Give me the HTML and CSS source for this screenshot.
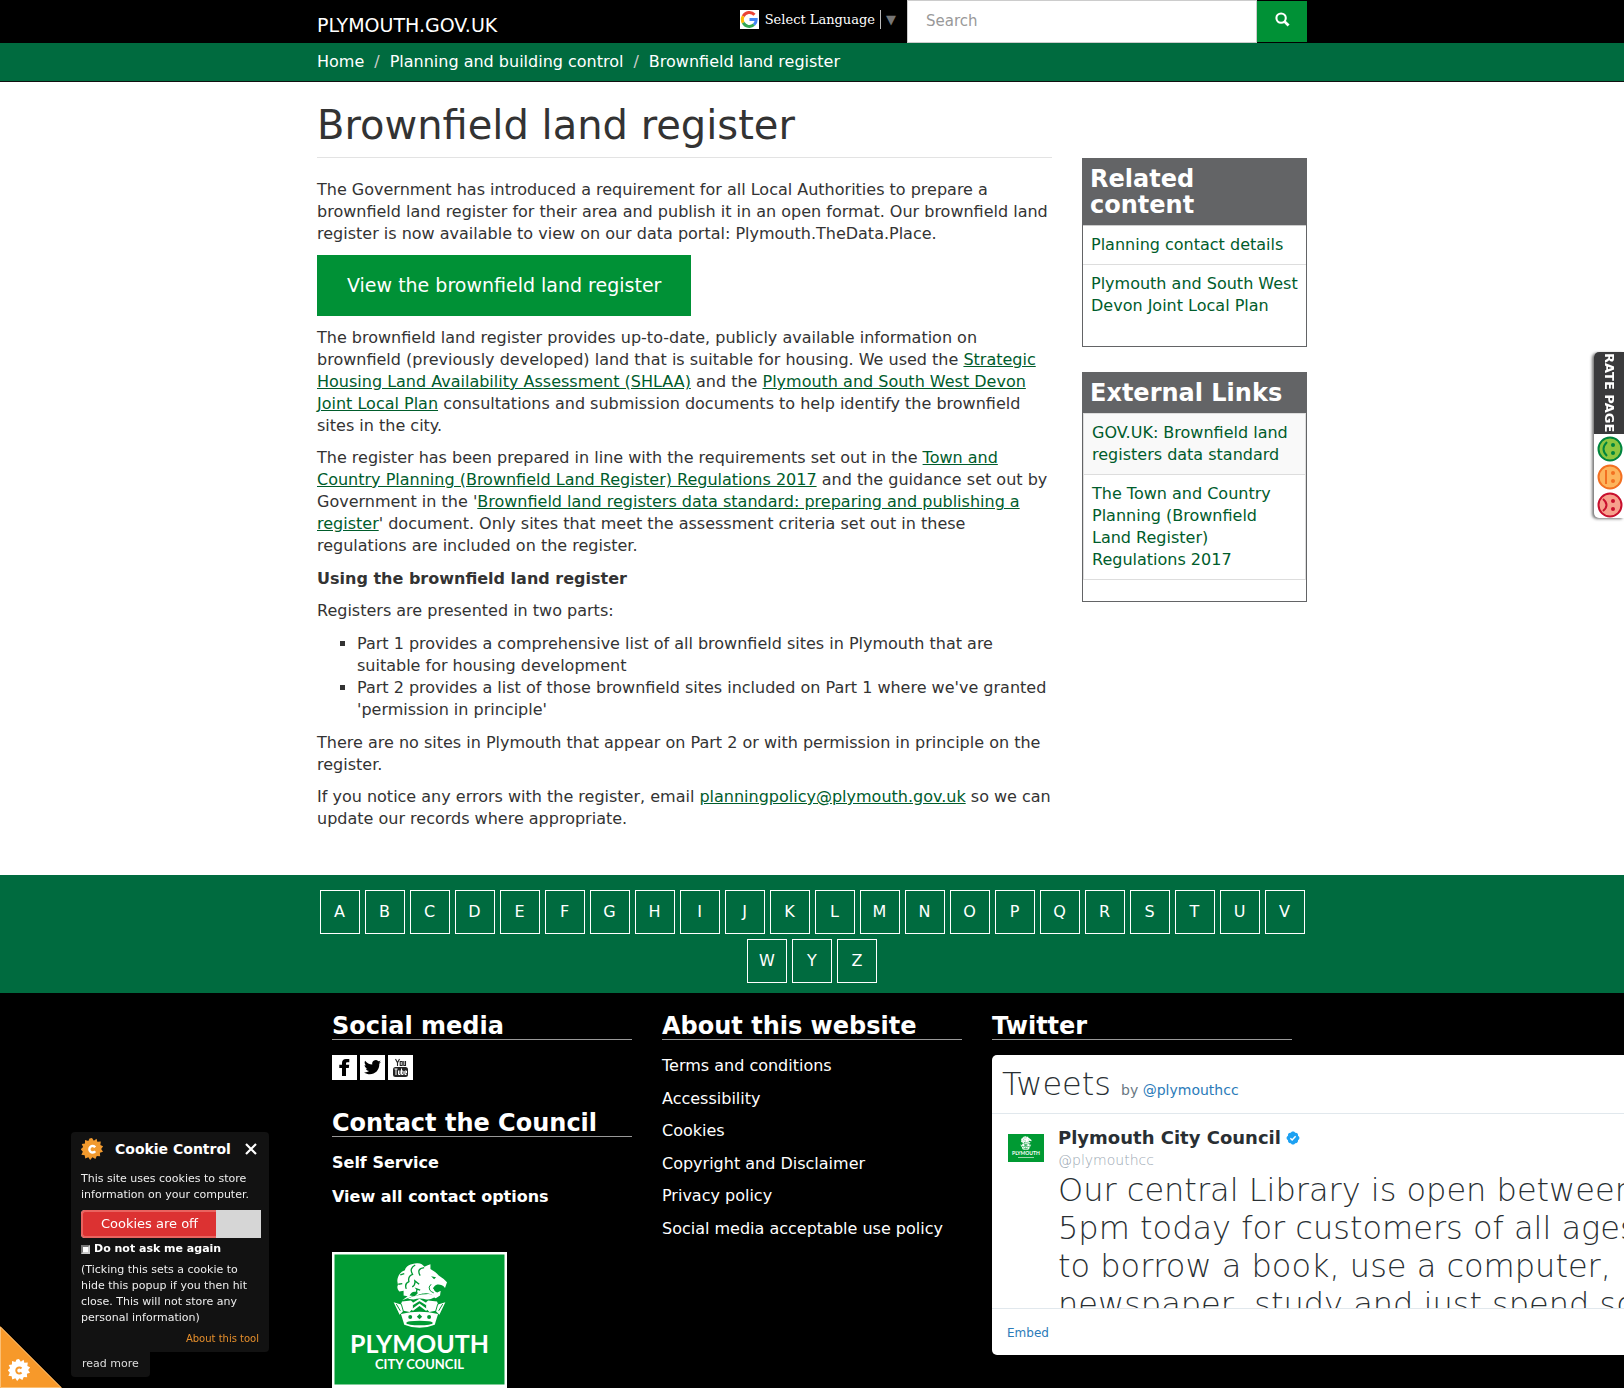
FILE: index.html
```html
<!DOCTYPE html>
<html lang="en">
<head>
<meta charset="utf-8">
<title>Brownfield land register | PLYMOUTH.GOV.UK</title>
<meta name="viewport" content="width=device-width, initial-scale=1">
<link rel="stylesheet" href="styles.css">
</head>
<body>
<svg class="defs" aria-hidden="true">
  <symbol id="cog" viewBox="0 0 24 24">
    <path d="M12 0l2 3 3-2.300.800 3.500 3.800-.300-.500 3.700 3 1.400L22 12l2 3-3.400 1.200.3 3.800-3.700-.300L15.700 23 12.500 21 10 24 8 20.900 4.600 22.300 4 18.700.4 18.200 2 15-.2 12.300 2.300 9.800.8 6.500 4.300 5.900 4.400 2.200 8 3.300 9.300.500z"/>
  </symbol>
  <symbol id="lion" viewBox="218 66 166 200">
    <path fill="#fff" d="M254 90C256 78 272 70 290 69C302 68 308 74 313 79Q320 76 331 72L331 86C340 91 350 98 356 106L371 116L381 126L375 143C366 132 350 130 343 138C338 146 344 155 352 157L362 152L360 166L347 174L338 170C340 163 322 158 312 160C296 160 290 170 276 168C268 173 256 176 246 180L262 168L250 166L250 152L237 154C230 146 230 138 233 134L231 122C232 108 240 94 254 90Z"/>
    <path fill="none" stroke="#009a33" stroke-width="4" d="M285 74Q266 84 277 102Q262 108 266 124Q252 130 258 146M312 82C296 84 292 92 300 106M276 140Q286 134 284 122L297 132M287 158Q292 150 289 146L300 150M240 104l12-4M234 132l12-2"/>
    <path fill="#009a33" d="M333 108l15 3-6 6zM366 140l-16-4-12 7 8 10 16-1zM268 166q8-18 26-8l-10 10z"/>
    <path fill="#fff" d="M262 176Q290 162 318 162Q340 160 342 172Q330 180 318 178Q300 172 280 178Z"/>
    <path fill="none" stroke="#009a33" stroke-width="3" d="M333 132q-10 8-4 18q6 6 12 8"/>
    <path fill="#fff" d="M220 186L242 193L245 184L272 181L278 186V206L268 216L250 212L238 224ZM376 186L354 193L351 184L324 181L318 186V206L328 216L346 212L358 224Z"/>
    <path fill="none" stroke="#009a33" stroke-width="3" d="M243 192l7 24M353 192l-7 24M228 192l12 20M368 192l-12 20"/>
    <path fill="none" stroke="#fff" stroke-width="6" d="M276 193l22-14 22 14M276 210l22-16 22 16"/>
    <path fill="#fff" d="M242 222Q298 208 354 222L344 254Q298 273 252 254Z"/>
    <g fill="#009a33"><circle cx="270" cy="231" r="6"/><circle cx="327" cy="231" r="6"/><path d="M298 222l8 8-8 8-8-8z"/><ellipse cx="298" cy="249" rx="40" ry="7"/></g>
  </symbol>
</svg>

<header class="topbar">
  <div class="container topbar-inner">
    <a class="brand" href="#">PLYMOUTH.GOV.UK</a>
    <a class="translate" href="#">
      <svg class="google" viewBox="0 0 19 19" aria-hidden="true">
        <path fill="#fff" d="M0 0h19v19H0z"/>
        <g fill="none" stroke-width="3">
          <path stroke="#ea4335" d="M3.200 6.200A7 7 0 0 1 14.500 4.700"/>
          <path stroke="#fbbc05" d="M3.200 12.800A7 7 0 0 1 3.200 6.200"/>
          <path stroke="#34a853" d="M14 14.700A7 7 0 0 1 3.200 12.800"/>
          <path stroke="#4285f4" d="M9.500 9.500H16.200A7 7 0 0 1 14 14.700"/>
        </g>
      </svg>
      <span class="translate-text">Select Language</span>
      <span class="translate-arrow">▼</span>
    </a>
    <form class="search">
      <input class="search-input" type="text" placeholder="Search" aria-label="Search">
      <button class="search-button" type="button" aria-label="Search">
        <svg class="search-icon" viewBox="0 0 16 16" aria-hidden="true"><circle cx="6.500" cy="6.500" r="5" fill="none" stroke="#fff" stroke-width="2.200"/><path d="M10 10l4.500 4.500" stroke="#fff" stroke-width="3"/></svg>
      </button>
    </form>
  </div>
</header>

<nav class="crumbs" aria-label="Breadcrumb">
  <ol class="container crumb-list">
    <li><a href="#">Home</a></li>
    <li><a href="#">Planning and building control</a></li>
    <li><a href="#">Brownfield land register</a></li>
  </ol>
</nav>

<div class="container page">
  <main class="main">
    <h1 class="title">Brownfield land register</h1>
    <p>The Government has introduced a requirement for all Local Authorities to prepare a brownfield land register for their area and publish it in an open format. Our brownfield land register is now available to view on our data portal: Plymouth.TheData.Place.</p>
    <div class="action"><a class="cta" href="#">View the brownfield land register</a></div>
    <p>The brownfield land register provides up-to-date, publicly available information on brownfield (previously developed) land that is suitable for housing. We used the <a href="#">Strategic Housing Land Availability Assessment (SHLAA)</a> and the <a href="#">Plymouth and South West Devon Joint Local Plan</a> consultations and submission documents to help identify the brownfield sites in the city.</p>
    <p>The register has been prepared in line with the requirements set out in the <a href="#">Town and Country Planning (Brownfield Land Register) Regulations 2017</a> and the guidance set out by Government in the '<a href="#">Brownfield land registers data standard: preparing and publishing a register</a>' document. Only sites that meet the assessment criteria set out in these regulations are included on the register.</p>
    <h2 class="subhead">Using the brownfield land register</h2>
    <p>Registers are presented in two parts:</p>
    <ul class="parts">
      <li>Part 1 provides a comprehensive list of all brownfield sites in Plymouth that are suitable for housing development</li>
      <li>Part 2 provides a list of those brownfield sites included on Part 1 where we've granted 'permission in principle'</li>
    </ul>
    <p>There are no sites in Plymouth that appear on Part 2 or with permission in principle on the register.</p>
    <p>If you notice any errors with the register, email <a href="#">planningpolicy@plymouth.gov.uk</a> so we can update our records where appropriate.</p>
  </main>
  <aside class="side">
    <section class="box">
      <h2>Related content</h2>
      <ul class="related">
        <li><a href="#">Planning contact details</a></li>
        <li><a href="#">Plymouth and South West Devon Joint Local Plan</a></li>
      </ul>
    </section>
    <section class="box">
      <h2>External Links</h2>
      <ul class="external">
        <li><a href="#">GOV.UK: Brownfield land registers data standard</a></li>
        <li><a href="#">The Town and Country Planning (Brownfield Land Register) Regulations 2017</a></li>
      </ul>
    </section>
  </aside>
</div>

<nav class="az" aria-label="A to Z">
  <ul class="container az-list">
    <li><a href="#">A</a></li><li><a href="#">B</a></li><li><a href="#">C</a></li><li><a href="#">D</a></li><li><a href="#">E</a></li><li><a href="#">F</a></li><li><a href="#">G</a></li><li><a href="#">H</a></li><li><a href="#">I</a></li><li><a href="#">J</a></li><li><a href="#">K</a></li><li><a href="#">L</a></li><li><a href="#">M</a></li><li><a href="#">N</a></li><li><a href="#">O</a></li><li><a href="#">P</a></li><li><a href="#">Q</a></li><li><a href="#">R</a></li><li><a href="#">S</a></li><li><a href="#">T</a></li><li><a href="#">U</a></li><li><a href="#">V</a></li><li><a href="#">W</a></li><li><a href="#">Y</a></li><li><a href="#">Z</a></li>
  </ul>
</nav>

<footer class="footer">
  <div class="container footer-grid">
    <div class="col">
      <h2>Social media</h2>
      <div class="social">
        <a href="#" aria-label="Facebook"><svg viewBox="0 0 25 25" aria-hidden="true"><path d="M10 21v-8H7.300V9.800H10V8c0-2.800 1.500-4 4-4h3.300v3.300h-1.800c-1.100 0-1.500.4-1.500 1.300v1.200h3.200L16.800 13H14v8z"/></svg></a>
        <a href="#" aria-label="Twitter"><svg viewBox="0 0 25 25" aria-hidden="true"><path d="M21 6.800c-.6.300-1.300.5-2 .6.700-.4 1.300-1.100 1.500-1.900-.7.400-1.400.7-2.200.8A3.500 3.500 0 0 0 12.300 9.500C9.400 9.400 6.800 8 5.100 5.800c-1 1.600-.4 3.600 1.100 4.700-.6 0-1.100-.2-1.600-.4 0 1.700 1.200 3.100 2.800 3.400-.5.100-1 .2-1.600.1.400 1.400 1.700 2.400 3.300 2.400A7 7 0 0 1 4 17.400C11 22 19.700 17.400 19.300 8.700c.7-.5 1.200-1.100 1.700-1.900z"/></svg></a>
        <a href="#" aria-label="YouTube"><svg viewBox="0 0 25 25" aria-hidden="true"><rect x="5" y="12" width="15" height="10" rx="2.500" fill="#222"/><path d="M7.500 4l2 3.800V11M11.500 4l-2 3.800M12.200 6.500h2v4h-2zM15.800 6v4.500h1.700V6" fill="none" stroke="#222" stroke-width="1.100"/><path d="M6.500 14h3M8 14v6M10.500 15.500v4h1.600v-4M13.500 13.500v6h1.600v-3.500h-1.600M18.500 19.500h-1.600v-3.500h1.600v2h-1.600" fill="none" stroke="#fff"/></svg></a>
      </div>
      <h2>Contact the Council</h2>
      <ul class="contact">
        <li><a href="#">Self Service</a></li>
        <li><a href="#">View all contact options</a></li>
      </ul>
      <svg class="logo" viewBox="0 0 175 136" role="img" aria-label="Plymouth City Council">
        <path fill="#fff" d="M0 0h175v136H0z"/><path fill="#009a33" d="M2.500 2.500h170v130h-170z"/>
        <use href="#lion" x="61" y="10" width="55" height="67"/>
        <text class="logo-name" x="87.500" y="101">PLYMOUTH</text>
        <text class="logo-sub" x="87.500" y="117">CITY COUNCIL</text>
      </svg>
    </div>
    <div class="col">
      <h2>About this website</h2>
      <ul class="about">
        <li><a href="#">Terms and conditions</a></li>
        <li><a href="#">Accessibility</a></li>
        <li><a href="#">Cookies</a></li>
        <li><a href="#">Copyright and Disclaimer</a></li>
        <li><a href="#">Privacy policy</a></li>
        <li><a href="#">Social media acceptable use policy</a></li>
      </ul>
    </div>
    <div class="col">
      <h2>Twitter</h2>
      <div class="timeline">
        <div class="timeline-head"><span class="tweets">Tweets</span> <span class="by">by <a href="#">@plymouthcc</a></span></div>
        <div class="timeline-body">
          <svg class="avatar" viewBox="0 0 36 28" aria-hidden="true"><path fill="#009a33" d="M0 0h36v28H0z"/><use href="#lion" x="11" y="2" width="14" height="14"/><text class="avatar-name" x="18" y="21">PLYMOUTH</text><path stroke="#9dd6ae" d="M10 23.500h16"/></svg>
          <div class="tweet">
            <div class="author">Plymouth City Council
              <svg class="verified" viewBox="0 0 24 24" aria-hidden="true"><path fill="#1da1f2" d="M12 1c1.800 0 3 .9 3.700 2.200 3-.6 5.500 1.900 4.900 4.900C22 8.900 23 10.300 23 12s-1 3.100-2.400 3.900c.6 3-1.900 5.500-4.900 4.900C15 22.100 13.800 23 12 23s-3-.9-3.700-2.200c-3 .6-5.500-1.900-4.900-4.900C2 15.100 1 13.700 1 12s1-3.100 2.400-3.900c-.6-3 1.900-5.500 4.900-4.900C9 1.900 10.200 1 12 1z"/><path fill="none" stroke="#fff" stroke-width="2.500" d="M7.500 12.500l3 3L16.500 9"/></svg>
            </div>
            <div class="handle">@plymouthcc</div>
            <p class="tweet-text">Our central Library is open between<br>5pm today for customers of all ages<br>to borrow a book, use a computer,<br>newspaper, study and just spend some</p>
          </div>
        </div>
        <div class="timeline-foot"><a href="#">Embed</a></div>
      </div>
    </div>
  </div>
</footer>

<a class="rate" href="#">
  <span class="rate-label">RATE PAGE</span>
  <svg class="faces" viewBox="0 0 30 84" aria-hidden="true">
    <g stroke-width="2">
      <g stroke="#00853e" fill="#8cc63f"><circle cx="16" cy="15" r="11.500"/><path fill="none" d="M13 8q-7 7 0 14"/></g>
      <g stroke="#f37021" fill="#fdb45c"><circle cx="16" cy="43" r="11.500"/><path fill="none" d="M12 36v14"/></g>
      <g stroke="#c8102e" fill="#f7a08c"><circle cx="16" cy="71" r="11.500"/><path fill="none" d="M9 65q7 6 0 12"/></g>
    </g>
    <g fill="#00853e"><circle cx="19" cy="11" r="2"/><circle cx="19" cy="19" r="2"/></g>
    <g fill="#f37021"><circle cx="19" cy="39" r="2"/><circle cx="19" cy="47" r="2"/></g>
    <g fill="#c8102e"><circle cx="19" cy="67" r="2"/><circle cx="19" cy="75" r="2"/></g>
  </svg>
</a>

<aside class="cookie" aria-label="Cookie Control">
  <div class="cookie-panel">
    <div class="cookie-head">
      <svg class="cookie-cog" viewBox="0 0 24 24" aria-hidden="true"><use href="#cog" fill="#f29a2e"/><path d="M15.500 10a3.600 3.600 0 1 0 0 4.500" fill="none" stroke="#fff" stroke-width="2.600"/></svg>
      <h2>Cookie Control</h2>
      <button class="cookie-close" type="button" aria-label="Close"><svg viewBox="0 0 12 12" aria-hidden="true"><path d="M1 1l10 10M11 1L1 11" stroke="#fff" stroke-width="2.200"/></svg></button>
    </div>
    <p>This site uses cookies to store information on your computer.</p>
    <button class="cookie-toggle" type="button"><span>Cookies are off</span></button>
    <label class="cookie-ask"><input type="checkbox">Do not ask me again</label>
    <p>(Ticking this sets a cookie to hide this popup if you then hit close. This will not store any personal information)</p>
    <a class="cookie-about" href="#">About this tool</a>
  </div>
  <a class="cookie-more" href="#">read more</a>
</aside>
<button class="cookie-corner" type="button" aria-label="Open Cookie Control">
  <svg viewBox="0 0 62 62" aria-hidden="true"><path fill="#f7992a" d="M0 0l62 62H0z"/><path fill="none" stroke="#fbbf74" d="M.5 1v60.500H61z"/><use href="#cog" x="8" y="33" width="22" height="22" fill="#fff"/><path d="M21.500 42.500a3 3 0 1 0 0 4" fill="none" stroke="#f7992a" stroke-width="2"/></svg>
</button>
</body>
</html>
```
FILE: styles.css
```css
* { box-sizing: border-box; }
body {
  margin: 0;
  background: #fff;
  color: #333;
  font: 16px/22px "DejaVu Sans", sans-serif;
}
a { color: #005c2b; }
ul, ol { margin: 0; padding: 0; list-style: none; }
h1, h2, p { margin: 0; }
svg { display: block; }
.defs { position: absolute; width: 0; height: 0; }
.container { max-width: 1020px; margin: 0 auto; padding: 0 15px; }

/* Top bar */
.topbar { background: #000; }
.topbar-inner { display: flex; align-items: flex-start; }
.brand { margin-right: auto; padding-top: 14px; color: #fff; font-size: 19px; text-decoration: none; }
.translate {
  display: flex;
  align-items: center;
  padding-top: 10px;
  margin-right: 11px;
  color: #fff;
  font: 13px/19px "DejaVu Serif", serif;
  text-decoration: none;
}
.google { width: 19px; height: 19px; margin-right: 6px; }
.translate-text { padding-right: 5px; border-right: 1px solid #bbb; }
.translate-arrow { padding-left: 5px; color: #767676; font-family: "DejaVu Sans", sans-serif; }
.search { display: flex; width: 400px; height: 43px; }
.search-input {
  flex: 1;
  min-width: 0;
  padding: 0 18px 2px;
  border: 1px solid #ccc;
  background: #fff;
  color: #555;
  font: 15px/22px "DejaVu Sans", sans-serif;
}
.search-input::placeholder { color: #999; opacity: 1; }
.search-button {
  display: grid;
  place-items: center;
  width: 50px;
  margin: 1px 0;
  padding: 0 0 4px;
  border: 0;
  background: #009136;
}
.search-icon { width: 15px; height: 15px; }

/* Breadcrumb */
.crumbs { background: #006b3f; border-bottom: 1px solid #111; }
.crumb-list { display: flex; padding-top: 8px; padding-bottom: 8px; }
.crumb-list a { color: #fff; text-decoration: none; }
.crumb-list li + li::before { content: "/"; padding: 0 10px; color: #ccc; }

/* Page body */
.page { display: flex; gap: 30px; padding-top: 20px; padding-bottom: 35px; }
.main { flex: 1; min-width: 0; }
.main p { margin-bottom: 10px; }
.title {
  padding-bottom: 8px;
  margin-bottom: 21px;
  border-bottom: 1px solid #e3e3e3;
  font-size: 40px;
  font-weight: 400;
  line-height: 47px;
}
.action { margin-bottom: 11px; }
.cta {
  display: inline-block;
  padding: 17px 30px;
  background: #009136;
  color: #fff;
  font-size: 19px;
  line-height: 27px;
  text-decoration: none;
  vertical-align: top;
}
.subhead { margin: 11px 0 10px; font-size: 16px; }
.parts { margin: 11px 0; padding-left: 40px; list-style: square; }

/* Sidebar */
.side { width: 225px; padding-top: 56px; }
.box { margin-bottom: 25px; padding-bottom: 21px; border: 1px solid #636466; }
.box h2 { padding: 7px; background: #636466; color: #fff; font-size: 24px; line-height: 26px; }
.side a { text-decoration: none; }
.side li { padding: 8px 7px 8px 8px; border-top: 1px solid #ddd; }
.related li:first-child { border-color: #ccc; }
.external { border: solid #ddd; border-width: 0 1px 1px; }
.external li:first-child { background: #f9f9f9; }

/* A to Z */
.az { background: #006b3f; padding: 15px 0 10px; }
.az-list { display: flex; flex-wrap: wrap; justify-content: center; gap: 5px; }
.az-list a {
  display: block;
  width: 40px;
  border: 1px solid #fff;
  color: #fff;
  line-height: 42px;
  text-align: center;
  text-decoration: none;
}

/* Footer */
.footer { overflow: hidden; background: #000; color: #fff; }
.footer-grid { display: grid; grid-template-columns: repeat(3, minmax(0, 1fr)); padding-top: 20px; }
.col { padding: 0 15px; }
.col h2 { margin-bottom: 15px; border-bottom: 1px solid #999; font-size: 24px; line-height: 26px; }
.col ul a { color: #fff; text-decoration: none; }
.social { display: flex; gap: 3px; margin-bottom: 30px; }
.social a { width: 25px; height: 25px; background: #fff; }
.contact { display: grid; gap: 12px; margin-bottom: 44px; font-weight: 700; }
.about { display: grid; align-content: space-between; min-height: 185px; }
.logo { width: 175px; height: 136px; }
.logo text, .avatar text { fill: #fff; font-family: Lato, sans-serif; font-weight: 700; text-anchor: middle; }
.logo .logo-name { font-size: 25px; }
.logo .logo-sub { font-size: 13px; }
.avatar .avatar-name { font-size: 5px; }

/* Twitter timeline */
.timeline { width: 700px; border-radius: 5px; background: #fff; color: #292f33; }
.timeline a { color: #2b7bb9; text-decoration: none; }
.timeline-head { height: 59px; padding: 10px 10px 0; border-bottom: 1px solid #e1e8ed; line-height: 39px; }
.tweets { font: 200 32px/39px "DejaVu Sans Light", "DejaVu Sans", sans-serif; }
.by { margin-left: 5px; color: #697882; font-size: 14px; }
.timeline-body { display: flex; height: 194px; overflow: hidden; padding: 12px 16px 0; gap: 14px; }
.avatar { flex: none; width: 36px; height: 28px; margin-top: 8px; }
.author { display: flex; align-items: center; gap: 5px; font-size: 18px; font-weight: 700; line-height: 23px; }
.verified { width: 14px; height: 14px; }
.handle { color: #9aa7b2; font: 200 14px/22px "DejaVu Sans Light", "DejaVu Sans", sans-serif; }
.tweet-text { font: 200 32px/38px "DejaVu Sans Light", "DejaVu Sans", sans-serif; white-space: nowrap; }
.timeline-foot { padding: 13px 15px 11px; border-top: 1px solid #e1e8ed; font-size: 12px; }

/* Rate this page tab */
.rate {
  position: fixed;
  top: 352px;
  right: 0;
  width: 30px;
  border-radius: 5px 0 0 5px;
  overflow: hidden;
  background: #fff;
  box-shadow: -2px 1px 3px #777;
  text-decoration: none;
}
.rate-label {
  display: block;
  width: 30px;
  height: 82px;
  background: #3a3a3c;
  color: #fff;
  font-size: 13px;
  font-weight: 700;
  line-height: 30px;
  text-align: center;
  white-space: nowrap;
  writing-mode: vertical-rl;
}
.faces { width: 30px; height: 84px; }

/* Cookie control */
.cookie {
  position: fixed;
  left: 71px;
  bottom: 11px;
  width: 198px;
  color: #eee;
  font-size: 11px;
  line-height: 16px;
}
.cookie-panel { padding: 5px 8px 5px 10px; border-radius: 4px 4px 4px 0; background: #121212; }
.cookie-head { display: flex; align-items: center; height: 24px; margin-bottom: 10px; }
.cookie-cog { width: 22px; height: 22px; }
.cookie-head h2 { flex: 1; margin-left: 12px; color: #fff; font-size: 14px; line-height: 22px; }
.cookie-close { width: 12px; height: 12px; margin-right: 4px; padding: 0; border: 0; background: none; }
.cookie-toggle {
  display: block;
  width: 180px;
  height: 28px;
  margin: 7px 0 3px;
  padding: 0 45px 0 0;
  border: 0;
  border-radius: 4px 0 0 4px;
  background: #d6d6d6;
  color: #fff;
  font: 13px/24px "DejaVu Sans", sans-serif;
}
.cookie-toggle span { display: block; border: 2px solid #e9635f; border-right: 0; border-radius: 4px 0 0 4px; background: #dc3232; }
.cookie-ask { display: flex; align-items: center; gap: 4px; margin-bottom: 5px; color: #fff; font-weight: 700; white-space: nowrap; }
.cookie-ask input { appearance: none; width: 9px; height: 9px; margin: 0; border: 2px solid #999; border-color: #777 #ccc #ccc #777; background: #fff; }
.cookie-about { display: block; margin-top: 5px; padding-right: 2px; color: #e58e2b; font-size: 10px; line-height: 16px; text-align: right; text-decoration: none; }
.cookie-more { display: inline-block; padding: 4px 11px 5px; border-radius: 0 0 4px 4px; background: #121212; color: #ddd; text-decoration: none; vertical-align: top; }
.cookie-corner { position: fixed; left: 0; bottom: 0; width: 62px; height: 62px; padding: 0; border: 0; background: none; }
```
